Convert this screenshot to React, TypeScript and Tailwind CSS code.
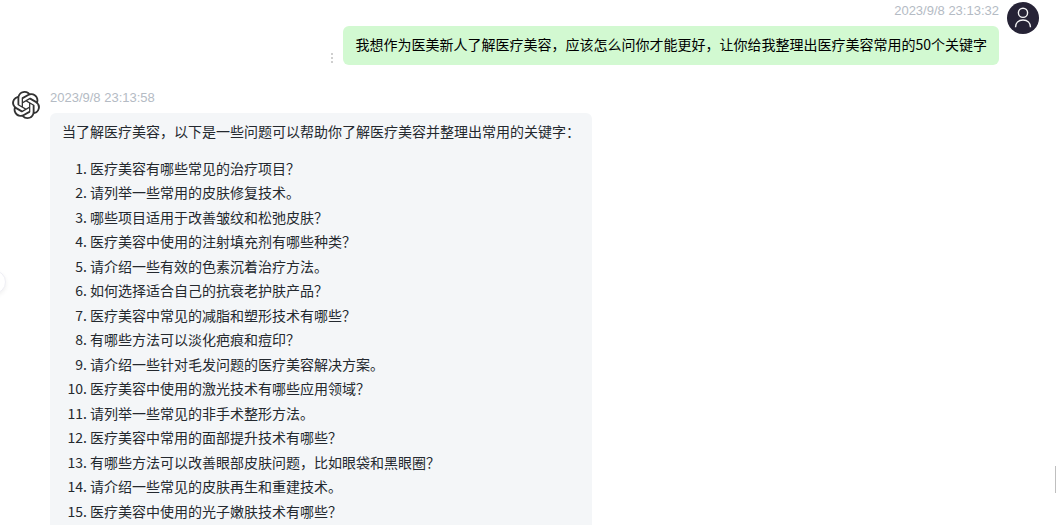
import type { ReactNode } from 'react';
import { SiOpenai } from 'react-icons/si';

const questions = [
  '医疗美容有哪些常见的治疗项目？',
  '请列举一些常用的皮肤修复技术。',
  '哪些项目适用于改善皱纹和松弛皮肤？',
  '医疗美容中使用的注射填充剂有哪些种类？',
  '请介绍一些有效的色素沉着治疗方法。',
  '如何选择适合自己的抗衰老护肤产品？',
  '医疗美容中常见的减脂和塑形技术有哪些？',
  '有哪些方法可以淡化疤痕和痘印？',
  '请介绍一些针对毛发问题的医疗美容解决方案。',
  '医疗美容中使用的激光技术有哪些应用领域？',
  '请列举一些常见的非手术整形方法。',
  '医疗美容中常用的面部提升技术有哪些？',
  '有哪些方法可以改善眼部皮肤问题，比如眼袋和黑眼圈？',
  '请介绍一些常见的皮肤再生和重建技术。',
  '医疗美容中使用的光子嫩肤技术有哪些？',
];

function Timestamp({ children }: { children: ReactNode }) {
  return (
    <time className="block font-['Liberation_Sans','Noto_Sans_CJK_SC',sans-serif] text-[13px] leading-[18px] text-[#b4bbc4]">
      {children}
    </time>
  );
}

function UserAvatar() {
  return (
    <div className="size-8 shrink-0 overflow-hidden rounded-full bg-[#262336]">
      <svg viewBox="0 0 32 32" className="size-8" fill="none" stroke="#f4f4f5" strokeWidth="1.4">
        <circle cx="16" cy="10.8" r="4.6" />
        <path d="M8.5 25.2C8.5 20.8 11.6 18 16 18s7.5 2.8 7.5 7.2" />
      </svg>
    </div>
  );
}

function UserMessage() {
  return (
    <article className="flex items-start justify-end gap-2">
      <div className="flex min-w-0 flex-col items-end gap-1.5">
        <Timestamp>2023/9/8 23:13:32</Timestamp>
        <div className="flex items-end gap-1">
          <button type="button" aria-label="更多" className="text-[#cfcfcf]">
            <svg viewBox="0 0 16 16" className="size-4" fill="currentColor">
              <path d="M8 4h2v2H8zM8 8h2v2H8zM8 12h2v2H8z" />
            </svg>
          </button>
          <p className="rounded-md bg-[#d2f9d1] px-3 pt-1.5 pb-2 leading-[25px] text-black">
            我想作为医美新人了解医疗美容，应该怎么问你才能更好，让你给我整理出医疗美容常用的50个关键字
          </p>
        </div>
      </div>
      <UserAvatar />
    </article>
  );
}

function AssistantMessage() {
  return (
    <article className="flex items-start gap-2">
      <div className="flex size-8 shrink-0 items-center justify-center text-[#333333]">
        <SiOpenai size={28} />
      </div>
      <div className="flex min-w-0 flex-col items-start gap-1.5">
        <Timestamp>2023/9/8 23:13:58</Timestamp>
        <div className="rounded-md bg-[#f4f6f8] px-3 pt-1.5 pb-2 leading-[1.75] text-[#24292f]">
          <p className="mb-3">
            当了解医疗美容，以下是一些问题可以帮助你了解医疗美容并整理出常用的关键字：
          </p>
          <ol className="list-decimal pl-7">
            {questions.map((question) => (
              <li key={question}>{question}</li>
            ))}
          </ol>
        </div>
      </div>
    </article>
  );
}

export default function App() {
  return (
    <div className="relative h-screen overflow-hidden bg-white font-['Noto_Sans_CJK_SC',sans-serif] text-sm">
      <main className="flex flex-col gap-6 pt-0.5 pr-[17px] pl-2.5">
        <UserMessage />
        <AssistantMessage />
      </main>
      <button
        type="button"
        aria-label="展开侧边栏"
        className="absolute top-[270px] -left-[18px] size-6 rounded-full border border-[#efeff5] bg-white shadow-[0_2px_4px_rgba(0,0,0,0.06)]"
      />
      <div className="absolute top-[466px] right-0 h-[27px] w-px bg-[#bfbfbf]" />
    </div>
  );
}
